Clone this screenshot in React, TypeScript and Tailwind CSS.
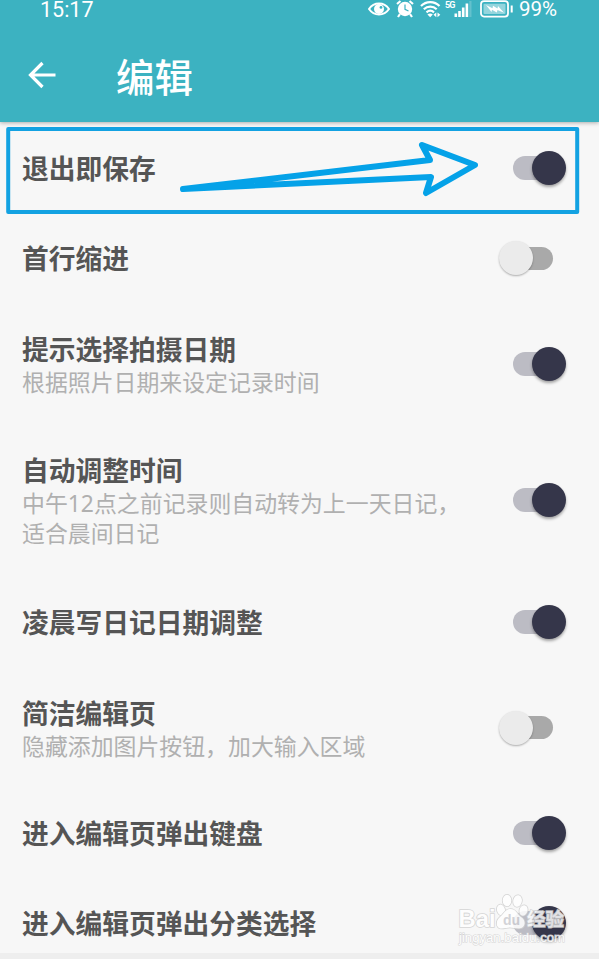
type Setting = {
  title: string
  desc?: string[]
  on: boolean
  height: string
}

const settings: Setting[] = [
  { title: '退出即保存', on: true, height: 'h-[91px]' },
  { title: '首行缩进', on: false, height: 'h-[90px]' },
  { title: '提示选择拍摄日期', desc: ['根据照片日期来设定记录时间'], on: true, height: 'h-[121px]' },
  {
    title: '自动调整时间',
    desc: ['中午12点之前记录则自动转为上一天日记，', '适合晨间日记'],
    on: true,
    height: 'h-[152px]',
  },
  { title: '凌晨写日记日期调整', on: true, height: 'h-[91px]' },
  { title: '简洁编辑页', desc: ['隐藏添加图片按钮，加大输入区域'], on: false, height: 'h-[121px]' },
  { title: '进入编辑页弹出键盘', on: true, height: 'h-[90px]' },
  { title: '进入编辑页弹出分类选择', on: true, height: 'h-[90px]' },
]

function StatusBar() {
  return (
    <div className="flex h-[19px] items-center pr-[42px] pl-[40px] font-['Roboto',sans-serif] text-white">
      <span className="text-[21.5px] leading-[19px]">15:17</span>
      <div className="ml-auto flex items-center">
        {/* 护眼 */}
        <svg className="mr-[6px]" width="22" height="19" viewBox="0 0 22 19" fill="none">
          <path d="M1 9C6 1.7 16 1.7 21 9C16 16.3 6 16.3 1 9Z" stroke="currentColor" strokeWidth="2" />
          <circle cx="11" cy="9" r="5" fill="currentColor" />
          <circle cx="13" cy="7.4" r="1.4" fill="#3cb2c1" />
        </svg>
        {/* 闹钟 */}
        <svg className="mr-[6px]" width="18" height="19" viewBox="0 0 18 19" fill="none">
          <circle cx="9" cy="9" r="7.2" fill="currentColor" />
          <path d="M1 4L4.5 1M17 4L13.5 1M4 14L2 17M14 14L16 17" stroke="currentColor" strokeWidth="2.2" />
          <path d="M9 4.5V9.3L12.5 11" stroke="#3cb2c1" strokeWidth="1.2" />
        </svg>
        {/* Wi-Fi */}
        <svg className="mr-[4px]" width="21" height="19" viewBox="0 0 21 19" fill="none" stroke="currentColor" strokeWidth="2.2">
          <path d="M1 6C6 .8 14.5 .8 19.5 6" />
          <path d="M3.8 9.3C7.5 5.8 13 5.8 16.7 9.3" />
          <path d="M6.5 12.3C9 10.2 11.6 10.2 14 12.3" />
          <path d="M10.2 17.2L7.4 14.5C9.2 13.2 11.2 13.2 12.8 14.5Z" fill="currentColor" stroke="none" />
          <path d="M13.5 14.8L16.3 12.4V17.2ZM20.3 14.8L17.5 12.4V17.2Z" fill="currentColor" stroke="none" />
        </svg>
        <span className="w-[9px] self-start text-[9px] leading-[10px] font-bold tracking-[-0.8px]">5G</span>
        {/* 信号 */}
        <svg className="mr-[8px]" width="18" height="19" viewBox="0 0 18 19" fill="currentColor">
          <rect x="0.5" y="13.5" width="2.6" height="3.5" />
          <rect x="4.2" y="11" width="2.6" height="6" />
          <rect x="7.9" y="7.5" width="2.6" height="9.5" />
          <rect x="11.6" y="3.5" width="2.6" height="13.5" />
          <rect x="15.3" y="1" width="2.2" height="16" opacity="0.2" />
        </svg>
        {/* 电池 */}
        <svg className="mr-[5px]" width="34" height="19" viewBox="0 0 34 19" fill="none">
          <rect x="1" y="1.2" width="27" height="15.4" rx="3" stroke="currentColor" strokeWidth="1.8" />
          <rect x="3.5" y="3.7" width="22" height="10.4" rx="1" fill="currentColor" opacity="0.45" />
          <path d="M6 5L12.5 8.2L13 5.800L17.500 8.500L18 6L24 12.800L17.500 10L16.800 12.500L12 9.800L11.500 12Z" fill="currentColor" />
          <path d="M31.7 5.5V12.5" stroke="currentColor" strokeWidth="2" />
        </svg>
        <span className="w-[38px] text-[20.5px] leading-[19px]">99%</span>
      </div>
    </div>
  )
}

function Toggle({ on }: { on: boolean }) {
  return on ? (
    <div className="relative mr-[33px] flex h-[34px] w-[53px] items-center" role="switch" aria-checked="true">
      <div className="h-[24px] w-[40px] rounded-full bg-[#bcbcc4]" />
      <div className="absolute right-0 h-[34px] w-[34px] rounded-full bg-[#35364a] shadow-[0_2px_3px_rgba(0,0,0,0.35)]" />
    </div>
  ) : (
    <div className="relative mr-[46px] flex h-[34px] w-[54px] items-center justify-end" role="switch" aria-checked="false">
      <div className="h-[23px] w-[40px] rounded-full bg-[#a9a9a9]" />
      <div className="absolute left-0 h-[34px] w-[34px] rounded-full bg-[#ebebeb] shadow-[0_1px_2px_rgba(0,0,0,0.3)]" />
    </div>
  )
}

function SettingRow({ title, desc, on, height }: Setting) {
  return (
    <div className={`flex shrink-0 items-center justify-between pl-[22px] ${height}`}>
      <div className="pt-[2px]">
        <h2 className="text-[26.75px] leading-[36px] font-bold whitespace-nowrap text-[#555555]">{title}</h2>
        {desc?.map((line) => (
          <p key={line} className="text-[22.9px] leading-[30px] whitespace-nowrap text-[#b0b0b0]">
            {line}
          </p>
        ))}
      </div>
      <Toggle on={on} />
    </div>
  )
}

function Highlight() {
  return (
    <svg className="pointer-events-none absolute top-0 left-0" width="599" height="230" viewBox="0 0 599 230" fill="none" strokeLinejoin="round">
      <rect x="8.2" y="129" width="569" height="83" stroke="#13a2e2" strokeWidth="4" />
      <path d="M183 189L430 160L422 145L475 165L426 193L431 177Z" stroke="#05a2e8" strokeWidth="6" />
    </svg>
  )
}

function Watermark() {
  return (
    <svg
      className="pointer-events-none absolute top-[890px] left-[450px]"
      width="130"
      height="60"
      viewBox="0 0 130 60"
      fill="#ffffff"
      stroke="#cfcfcf"
      strokeWidth="1.6"
      paintOrder="stroke"
      fontFamily="'Liberation Sans', 'Noto Sans CJK SC', sans-serif"
    >
      <g opacity="0.85">
        <text x="8.5" y="37" fontSize="24" fontWeight="bold" textLength="37" lengthAdjust="spacingAndGlyphs">Bai</text>
        <ellipse cx="51" cy="20" rx="4" ry="5.5" transform="rotate(-15 51 20)" />
        <ellipse cx="57" cy="10.5" rx="4.3" ry="5.8" />
        <ellipse cx="67.5" cy="11" rx="4.3" ry="5.8" transform="rotate(12 67.5 11)" />
        <ellipse cx="73.5" cy="20.5" rx="4" ry="5.3" transform="rotate(18 73.5 20.5)" />
        <path d="M60.5 19C66 19 67 24 71 27C77 31 75 38.5 69 38.5C65 38.5 63 37.5 60 37.5C57 37.5 55 38.5 51.5 38.5C46 38.5 45 31 50 27C54 24 55 19 60.5 19Z" />
        <text x="53" y="35" fontSize="14" fontWeight="bold" fill="#cdcdd2" stroke="none">du</text>
        <text x="77" y="36" fontSize="18.5" fontWeight="bold" textLength="37">经验</text>
        <text x="9" y="52" fontSize="12" textLength="106" lengthAdjust="spacingAndGlyphs" strokeWidth="1">jingyan.baidu.com</text>
      </g>
    </svg>
  )
}

export default function App() {
  return (
    <div className="relative flex h-[959px] w-[599px] flex-col overflow-hidden bg-[#f7f7f7] font-['Noto_Sans','Noto_Sans_CJK_SC',sans-serif]">
      <header className="z-10 h-[122px] shrink-0 bg-[#3cb2c1] shadow-[0_1px_4px_rgba(0,0,0,0.3)]">
        <StatusBar />
        <div className="flex h-[103px] items-center pt-[12px] pl-[28px] text-white">
          <svg className="mb-[3px]" width="28" height="28" viewBox="0 0 28 28" fill="none" stroke="currentColor" strokeWidth="3.2">
            <path d="M14.5 2L2.5 14L14.5 26M2.5 14H27.5" />
          </svg>
          <h1 className="ml-[60px] text-[38.5px] leading-[48px] font-medium">编辑</h1>
        </div>
      </header>

      <main className="flex h-[831px] flex-col overflow-hidden">
        {settings.map((item) => (
          <SettingRow key={item.title} {...item} />
        ))}
      </main>
      <div className="flex-1 bg-[#eeeeee]" />

      <Highlight />
      <Watermark />
    </div>
  )
}
